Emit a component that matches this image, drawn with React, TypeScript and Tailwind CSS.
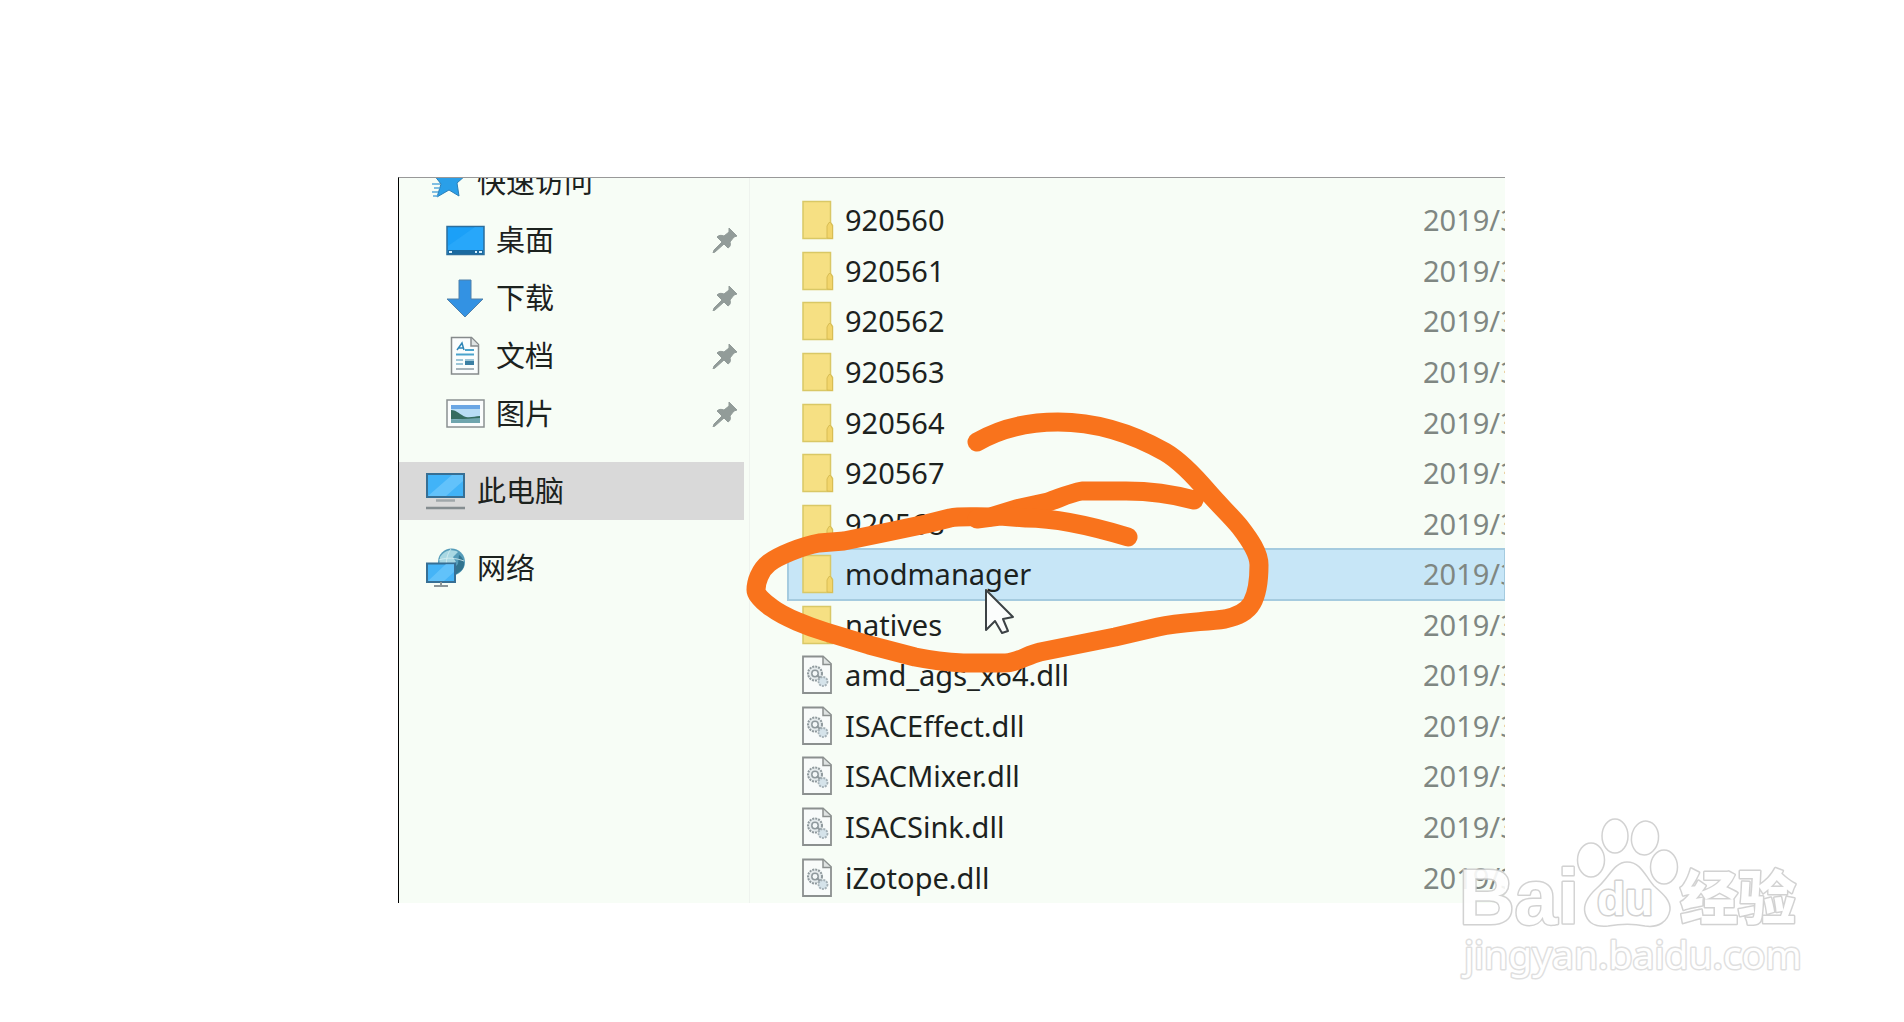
/**
 * Explorer window
 *
 * Navigation pane on the left, file list on the right, a hand-drawn
 * marker over the list and the site's watermark in the corner.
 */

import type { ReactNode } from "react";

type FileKind = "folder" | "dll";

const FILES: { name: string; kind: FileKind }[] = [
  { name: "920560",          kind: "folder" },
  { name: "920561",          kind: "folder" },
  { name: "920562",          kind: "folder" },
  { name: "920563",          kind: "folder" },
  { name: "920564",          kind: "folder" },
  { name: "920567",          kind: "folder" },
  { name: "920568",          kind: "folder" },
  { name: "modmanager",      kind: "folder" },
  { name: "natives",         kind: "folder" },
  { name: "amd_ags_x64.dll", kind: "dll" },
  { name: "ISACEffect.dll",  kind: "dll" },
  { name: "ISACMixer.dll",   kind: "dll" },
  { name: "ISACSink.dll",    kind: "dll" },
  { name: "iZotope.dll",     kind: "dll" },
];

const SELECTED = "modmanager";

const PINNED: { label: string; icon: ReactNode }[] = [
  { label: "桌面", icon: <DesktopIcon /> },
  { label: "下载", icon: <DownloadIcon /> },
  { label: "文档", icon: <DocumentIcon /> },
  { label: "图片", icon: <PictureIcon /> },
];

export default function App() {
  return (
    <main className="relative flex min-h-screen flex-col overflow-hidden bg-white px-[398px] pt-[177px] pb-[119px] font-['Noto_Sans','Noto_Sans_CJK_SC',sans-serif] text-[#1c221e]">
      <div className="relative mr-px flex flex-1 overflow-hidden border-t border-l border-t-[#999] border-l-black bg-[#f7fdf6]">
        <Sidebar />
        <FileList />
        <Marker />
      </div>
      <Watermark />
    </main>
  );
}

function Sidebar() {
  return (
    <nav className="-mt-[25px] w-[351px] shrink-0 border-r border-[#eef3ee] text-[29px] leading-[40px]">
      <NavItem icon={<StarIcon />} label="快速访问" />
      {PINNED.map((p) => (
        <NavItem key={p.label} icon={p.icon} label={p.label} pinned />
      ))}
      <div className="my-[19px] mr-[5px] bg-[#d9d9d9]">
        <NavItem icon={<ComputerIcon />} label="此电脑" />
      </div>
      <NavItem icon={<NetworkIcon />} label="网络" />
    </nav>
  );
}

function NavItem({ icon, label, pinned = false }: { icon: ReactNode; label: string; pinned?: boolean }) {
  return (
    <a
      href="#"
      className={`flex h-[58px] items-center gap-[11px] pr-[11px] ${pinned ? "pl-[46px]" : "pl-[27px]"}`}
    >
      {icon}
      <span className="flex-1">{label}</span>
      {pinned && <PinIcon />}
    </a>
  );
}

function FileList() {
  return (
    <div className="min-w-0 flex-1 pt-[17px] pl-[38px]">
      <table className="h-full w-full table-fixed border-collapse text-[29px] leading-[40px]">
        <tbody>
          {FILES.map((f) => (
            <tr
              key={f.name}
              className={f.name === SELECTED ? "bg-[#c7e6f7] outline-2 -outline-offset-1 outline-[#a5cbdf]" : ""}
            >
              <td className="p-0 pl-[14px]">
                <div className="flex items-center gap-[11px]">
                  {f.kind === "folder" ? <FolderIcon /> : <DllIcon />}
                  <span>{f.name}</span>
                </div>
              </td>
              <td className="w-[82px] overflow-hidden p-0 whitespace-nowrap text-[#7f8782]">2019/3</td>
            </tr>
          ))}
        </tbody>
      </table>
    </div>
  );
}

/* Icons */

function StarIcon() {
  return (
    <svg viewBox="0 0 40 40" className="size-10">
      <path d="M24 2l4 10 12 1-9 8 2 13-10-6-12 7 4-13-7-9 12-1z" fill="#2a9fe8" stroke="#2b7fb8" />
      <path d="M6 22h8M8 26h6M6 30h6M7 34h5" stroke="#5aa9dc" strokeWidth="1.5" />
    </svg>
  );
}

function DesktopIcon() {
  return (
    <svg viewBox="0 0 40 40" className="size-10">
      <rect x="2" y="6.5" width="37" height="28" fill="#1ba0f8" stroke="#2c6e9c" strokeWidth="1.5" />
      <path d="M3 26L30 7h8v24H3z" fill="#33adfb" opacity=".5" />
      <path d="M3 30h35v4H3z" fill="#1b6aa0" />
      <path d="M4 32h3M30 32h2M34 32h3" stroke="#d8f1ff" strokeWidth="2" />
    </svg>
  );
}

function DownloadIcon() {
  return (
    <svg viewBox="0 0 40 40" className="size-10">
      <path d="M14 2h12v19h12L20 39 2 21h12z" fill="#3392e3" stroke="#5180a8" />
    </svg>
  );
}

function DocumentIcon() {
  return (
    <svg viewBox="0 0 40 40" className="size-10">
      <path d="M6.5 1.5h20l7 7V38h-27z" fill="#fafdfd" stroke="#868b8c" strokeWidth="1.5" />
      <path d="M26 2v8h8" fill="#dfe4e4" stroke="#868b8c" strokeWidth="1.5" />
      <path d="M12 14l5-7 2 7M13 12h6" fill="none" stroke="#2f86b8" strokeWidth="1.5" />
      <path d="M20 14h9M11 18.500h18" stroke="#4aa3cc" strokeWidth="2" />
      <path d="M11 24h7M11 28h7M20 24h9" stroke="#7fb4cc" strokeWidth="1.5" />
      <path d="M20 25h9v4h-9z" fill="#3b7fa3" />
      <path d="M11 33h18" stroke="#8a9aa3" strokeWidth="1.5" />
    </svg>
  );
}

function PictureIcon() {
  return (
    <svg viewBox="0 0 40 40" className="size-10">
      <rect x="2" y="6" width="37" height="27" fill="#fbfdfd" stroke="#8b9091" strokeWidth="1.5" />
      <rect x="6" y="11" width="29" height="18" fill="#b9ddf5" />
      <path d="M6 11h29v4H6z" fill="#6ba6e4" />
      <path d="M6 16c6 0 9 5 15 7 5 1 9-1 14-1v3H6z" fill="#356c60" />
      <path d="M6 25c9 1 20-1 29-1v5H6z" fill="#6fa5ad" />
    </svg>
  );
}

function ComputerIcon() {
  return (
    <svg viewBox="0 0 40 40" className="size-10">
      <rect x="1" y="3" width="37" height="23" fill="#41b3f8" stroke="#376f94" strokeWidth="2" />
      <path d="M2 25L26 4h11v6L20 25z" fill="#74cbfc" opacity=".65" />
      <path d="M10 29.500h19" stroke="#a0a7aa" strokeWidth="2.5" />
      <path d="M0 37h39" stroke="#858d90" strokeWidth="2.5" />
    </svg>
  );
}

function NetworkIcon() {
  return (
    <svg viewBox="0 0 40 40" className="size-10">
      <circle cx="25.5" cy="14" r="13.5" fill="#559cb9" />
      <path d="M14 9c5-8 14-8 18-5l-5 5 3 5-8 5-9-1z" fill="#a9d8e3" />
      <path d="M33 7c5 3 7 10 3 15l-7 5-3-5 6-6z" fill="#31748f" />
      <path d="M25 1c-5 6-6 16-3 25M13 12c8-3 17-2 25 1" fill="none" stroke="#d7eff3" strokeWidth=".8" />
      <rect x="1" y="15.5" width="28" height="18.5" fill="#45b4f7" stroke="#376f94" strokeWidth="2" />
      <path d="M2 33L20 16h8v8L18 33z" fill="#74cbfc" opacity=".6" />
      <path d="M15 34v3M8 38h14" stroke="#8b9598" strokeWidth="2" />
    </svg>
  );
}

function PinIcon() {
  return (
    <svg viewBox="0 0 26 26" className="size-[26px]">
      <path
        d="M17 1l8 8-3 1-4 5c1 3 0 5-2 6l-4-4-9 8-2 1 1-3 8-8-5-5c2-2 4-2 7-1l5-4z"
        fill="#929c99"
        stroke="#929c99"
      />
    </svg>
  );
}

function FolderIcon() {
  return (
    <svg viewBox="0 0 32 40" className="h-10 w-8">
      <path d="M1 1.500h27.500v21l2 3V38.500H1z" fill="#f6e083" stroke="#d9c866" strokeWidth="1.5" />
      <path d="M25 38V26l2-3.500h1.500l2 3.500v12.500z" fill="#f2d56b" stroke="#d8bd54" />
    </svg>
  );
}

function DllIcon() {
  return (
    <svg viewBox="0 0 32 40" className="h-10 w-8">
      <path d="M1 1.500h20l8 7.500v29H1z" fill="#f8fbfa" stroke="#8b908f" strokeWidth="1.8" />
      <path d="M21 2v7.500h8" fill="#dfe3e2" stroke="#8b908f" strokeWidth="1.5" />
      <circle cx="13" cy="18.500" r="7" fill="#e4eaec" stroke="#8f999d" strokeWidth="2" strokeDasharray="2 1" />
      <circle cx="13" cy="18.500" r="3.2" fill="#f4f8f9" stroke="#8f999d" strokeWidth="1.5" />
      <path d="M15 20l6 6" stroke="#8f999d" strokeWidth="2" />
      <circle cx="21" cy="26.500" r="4.5" fill="#d5e3ea" stroke="#a4b0b6" strokeWidth="1.8" strokeDasharray="2 1" />
    </svg>
  );
}

/* Mouse pointer and the orange scribble around the selected folder */
function Marker() {
  return (
    <svg
      viewBox="740 400 560 280"
      className="pointer-events-none absolute top-[222px] left-[341px] h-[280px] w-[560px]"
    >
      <path
        d="M986 590v40l9-9 7 12 6-2-5-12 10-2z"
        fill="#fbfdfc"
        stroke="#3c4245"
        strokeWidth="2"
        strokeLinejoin="round"
      />
      <g fill="none" stroke="#f9731c" strokeWidth="19" strokeLinecap="round" strokeLinejoin="round">
        <path d="M977 442C1001 428 1029 422 1058 422C1095 422 1133 434 1165 452C1182 462 1197 479 1208 492C1220 506 1231 516 1240 527C1250 540 1259 553 1259 565C1259 578 1257 594 1252 603C1247 612 1238 616 1225 619C1205 622 1180 622 1158 627L1115 637L1040 652C1027 655 1017 663 1005 663L963 663C945 662 930 660 915 657L869 645L826 632C809 627 784 617 772 608C762 601 756 595 756 590C756 582 760 570 769 563C778 556 802 546 819 543L844 541L883 533L926 524L950 518C960 516 972 517 990 517L1016 509L1048 502C1060 498 1070 493 1082 491L1126 491C1148 491 1172 494 1194 500" />
        <path d="M977 519L1000 516L1026 518C1060 518 1095 527 1128 537" />
      </g>
    </svg>
  );
}

function Watermark() {
  return (
    <svg
      viewBox="1455 810 360 180"
      className="pointer-events-none absolute right-[89px] bottom-[32px] h-[180px] w-[360px] opacity-90"
    >
      <g fill="#fff" stroke="#cecece" strokeWidth="3" strokeLinejoin="round">
        <g strokeWidth="1.5">
          <ellipse cx="1591" cy="860" rx="13.5" ry="17" />
          <ellipse cx="1615" cy="836" rx="13" ry="17" />
          <ellipse cx="1645" cy="838" rx="13.5" ry="17" transform="rotate(8 1645 838)" />
          <ellipse cx="1664" cy="867" rx="13.5" ry="17" />
          <path d="M1627 862C1614 862 1609 878 1597 888C1587 897 1583 905 1585 913C1588 925 1597 927 1608 926C1620 924 1635 924 1645 926C1658 928 1668 922 1670 910C1671 900 1662 893 1654 886C1645 876 1641 862 1627 862Z" />
        </g>
        <g className="[paint-order:stroke]">
          <text x="1459" y="924" className="font-['Liberation_Sans',sans-serif] text-[77px] font-bold">Bai</text>
          <text x="1597" y="915" className="font-['Liberation_Sans',sans-serif] text-[46px] font-bold">du</text>
          <text x="1680" y="919" className="font-['Noto_Sans_CJK_SC',sans-serif] text-[58px] font-black">经验</text>
          <text x="1464" y="969" stroke="#dcdcdc" className="text-[39px]">jingyan.baidu.com</text>
        </g>
      </g>
    </svg>
  );
}
